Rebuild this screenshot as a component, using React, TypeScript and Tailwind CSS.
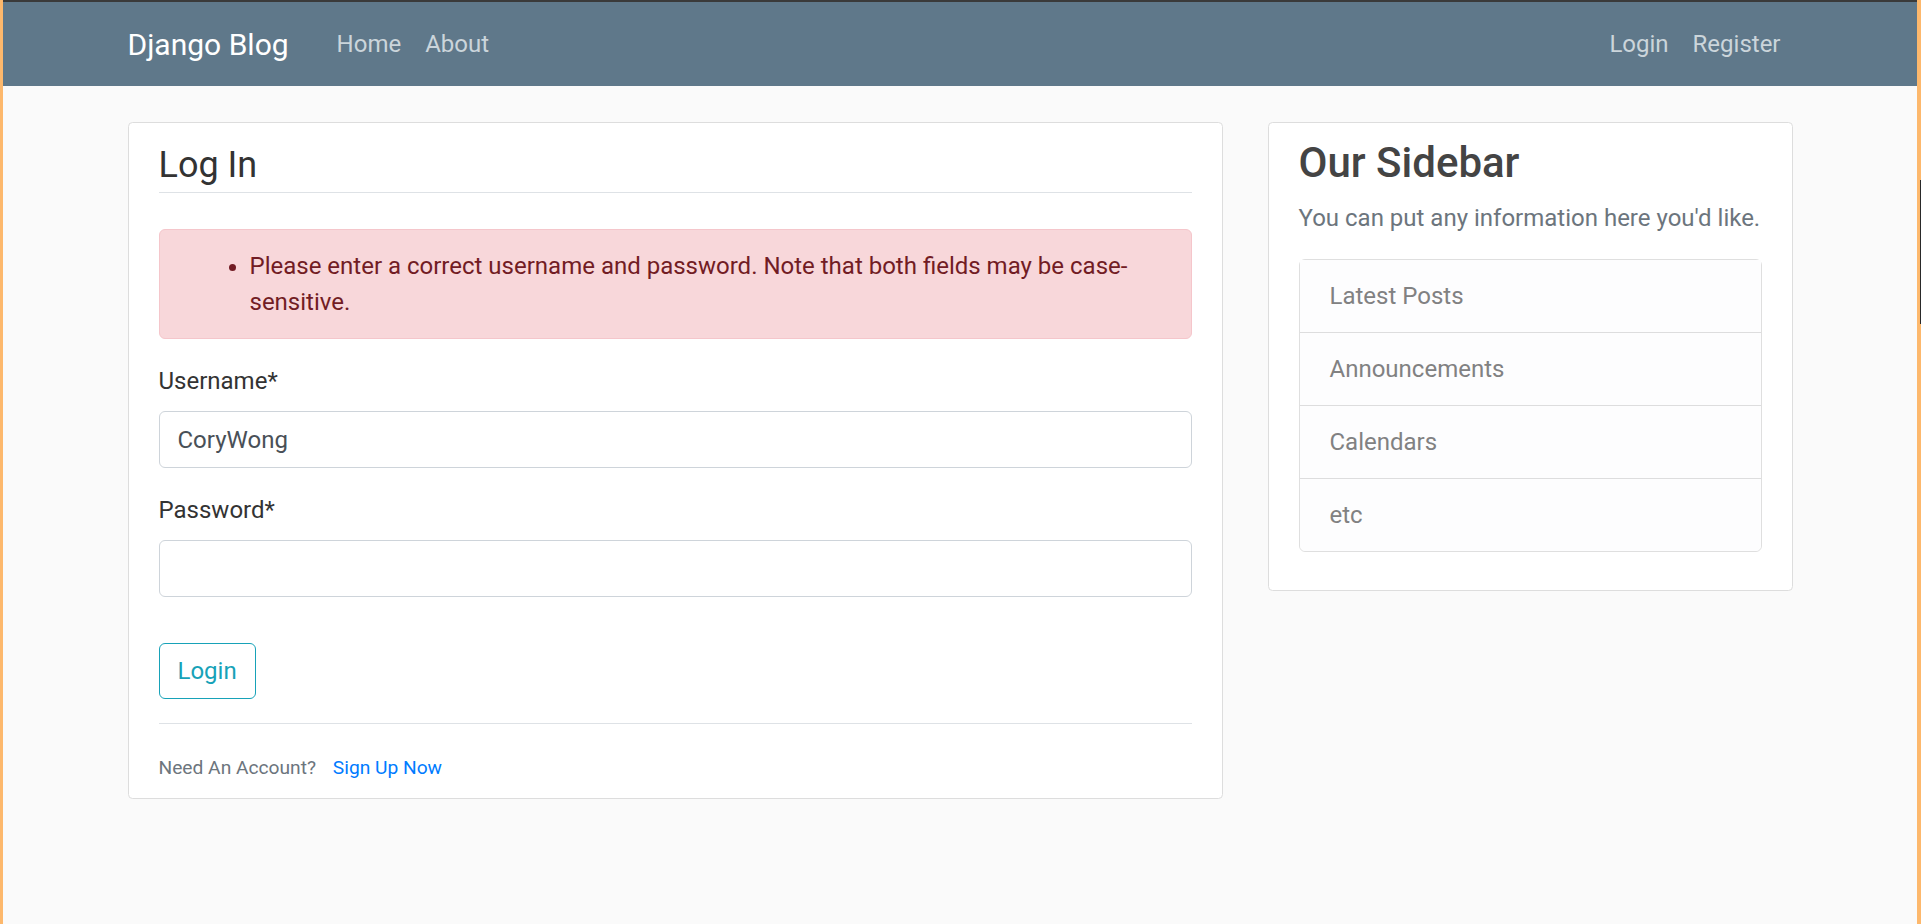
const sidebarLinks = ["Latest Posts", "Announcements", "Calendars", "etc"];

function NavBar() {
  return (
    <nav className="bg-[#5f788a] px-[24px] py-[12px]">
      <div className="mx-auto flex w-[1710px] items-center px-[22.5px]">
        <a href="#" className="mr-[36px] py-[7.5px] text-[30px] leading-[45px] text-white">
          Django Blog
        </a>
        <div className="mr-auto flex">
          <a href="#" className="px-[12px] py-[12px] text-[24px] leading-[36px] text-[#cbd5db]">
            Home
          </a>
          <a href="#" className="px-[12px] py-[12px] text-[24px] leading-[36px] text-[#cbd5db]">
            About
          </a>
        </div>
        <div className="flex">
          <a href="#" className="px-[12px] py-[12px] text-[24px] leading-[36px] text-[#cbd5db]">
            Login
          </a>
          <a href="#" className="px-[12px] py-[12px] text-[24px] leading-[36px] text-[#cbd5db]">
            Register
          </a>
        </div>
      </div>
    </nav>
  );
}

function LoginCard() {
  return (
    <div className="w-[1095px] shrink-0">
      <div className="mb-[30px] rounded-[4.5px] border border-[#dddddd] bg-white px-[30px] py-[15px]">
        <form onSubmit={(e) => e.preventDefault()}>
          {/* fieldset: its own bottom margin does not collapse with the last group's */}
          <div className="mb-[22px] flow-root">
            <div className="mb-[36px] border-b border-[#dee2e6] text-[36px] leading-[54px] text-[#333333]">Log In</div>
            <div className="mb-[24px] rounded-[6px] border border-[#f5c6cb] bg-[#f8d7da] px-[30px] py-[18px] text-[#721c24]">
              <ul className="list-disc pl-[60px] text-[24px] leading-[36px]">
                <li>Please enter a correct username and password. Note that both fields may be case-sensitive.</li>
              </ul>
            </div>
            <div className="mb-[24px]">
              <label className="mb-[12px] block text-[24px] leading-[36px] text-[#333333]">Username*</label>
              <input
                type="text"
                defaultValue="CoryWong"
                className="block h-[57px] w-full rounded-[6px] border border-[#ced4da] bg-white px-[18px] py-[9px] text-[24px] leading-[36px] text-[#495057] outline-none"
              />
            </div>
            <div className="mb-[24px]">
              <label className="mb-[12px] block text-[24px] leading-[36px] text-[#333333]">Password*</label>
              <input
                type="password"
                className="block h-[57px] w-full rounded-[6px] border border-[#ced4da] bg-white px-[18px] py-[9px] text-[24px] leading-[36px] text-[#495057] outline-none"
              />
            </div>
          </div>
          <div className="mb-[24px]">
            <button
              type="submit"
              className="rounded-[6px] border border-[#17a2b8] bg-white px-[18px] py-[9px] text-[24px] leading-[36px] text-[#17a2b8]"
            >
              Login
            </button>
          </div>
        </form>
        <div className="border-t border-[#dee2e6] pt-[27px] text-[24px] leading-[31px]">
          <span className="text-[19.2px] text-[#6c757d]">
            Need An Account?{" "}
            <a href="#" className="ml-[12px] text-[#007bff]">
              Sign Up Now
            </a>
          </span>
        </div>
      </div>
    </div>
  );
}

function Sidebar() {
  return (
    <div className="w-[525px] shrink-0">
      <div className="rounded-[4.5px] border border-[#dddddd] bg-white px-[30px] py-[15px]">
        <h3 className="mb-[12px] text-[42px] font-medium leading-[50px] text-[#444444]">Our Sidebar</h3>
        <p className="mb-[23px] text-[24px] leading-[36px] text-[#6c757d]">You can put any information here you'd like.</p>
        <ul className="mb-[23px] flex flex-col rounded-[6px] border border-[rgba(0,0,0,0.125)]">
          {sidebarLinks.map((item, i) => (
            <li
              key={item}
              className={
                i < sidebarLinks.length - 1
                  ? "border-b border-[rgba(0,0,0,0.125)] bg-[#fdfdfe] px-[30px] py-[18px] text-[24px] leading-[36px] text-[#818182]"
                  : "rounded-b-[6px] bg-[#fdfdfe] px-[30px] py-[18px] text-[24px] leading-[36px] text-[#818182]"
              }
            >
              {item}
            </li>
          ))}
        </ul>
      </div>
    </div>
  );
}

export default function App() {
  return (
    <div className="flex h-[924px] overflow-hidden bg-[#fafafa] font-['Roboto',sans-serif]">
      <div className="w-[3px] shrink-0 bg-[#fdb86c]" />
      <div className="flex min-w-0 flex-1 flex-col">
        <div className="h-[2px] bg-[#3a3a3a]" />
        <NavBar />
        <main className="mx-auto flex w-[1710px] gap-[45px] px-[22.5px] pt-[36px]">
          <LoginCard />
          <Sidebar />
        </main>
      </div>
      <div className="flex w-[4px] shrink-0 flex-col bg-[#fdb86c]">
        <div className="ml-auto mt-[180px] h-[144px] w-[1px] bg-[#2a2a2a]" />
      </div>
    </div>
  );
}
